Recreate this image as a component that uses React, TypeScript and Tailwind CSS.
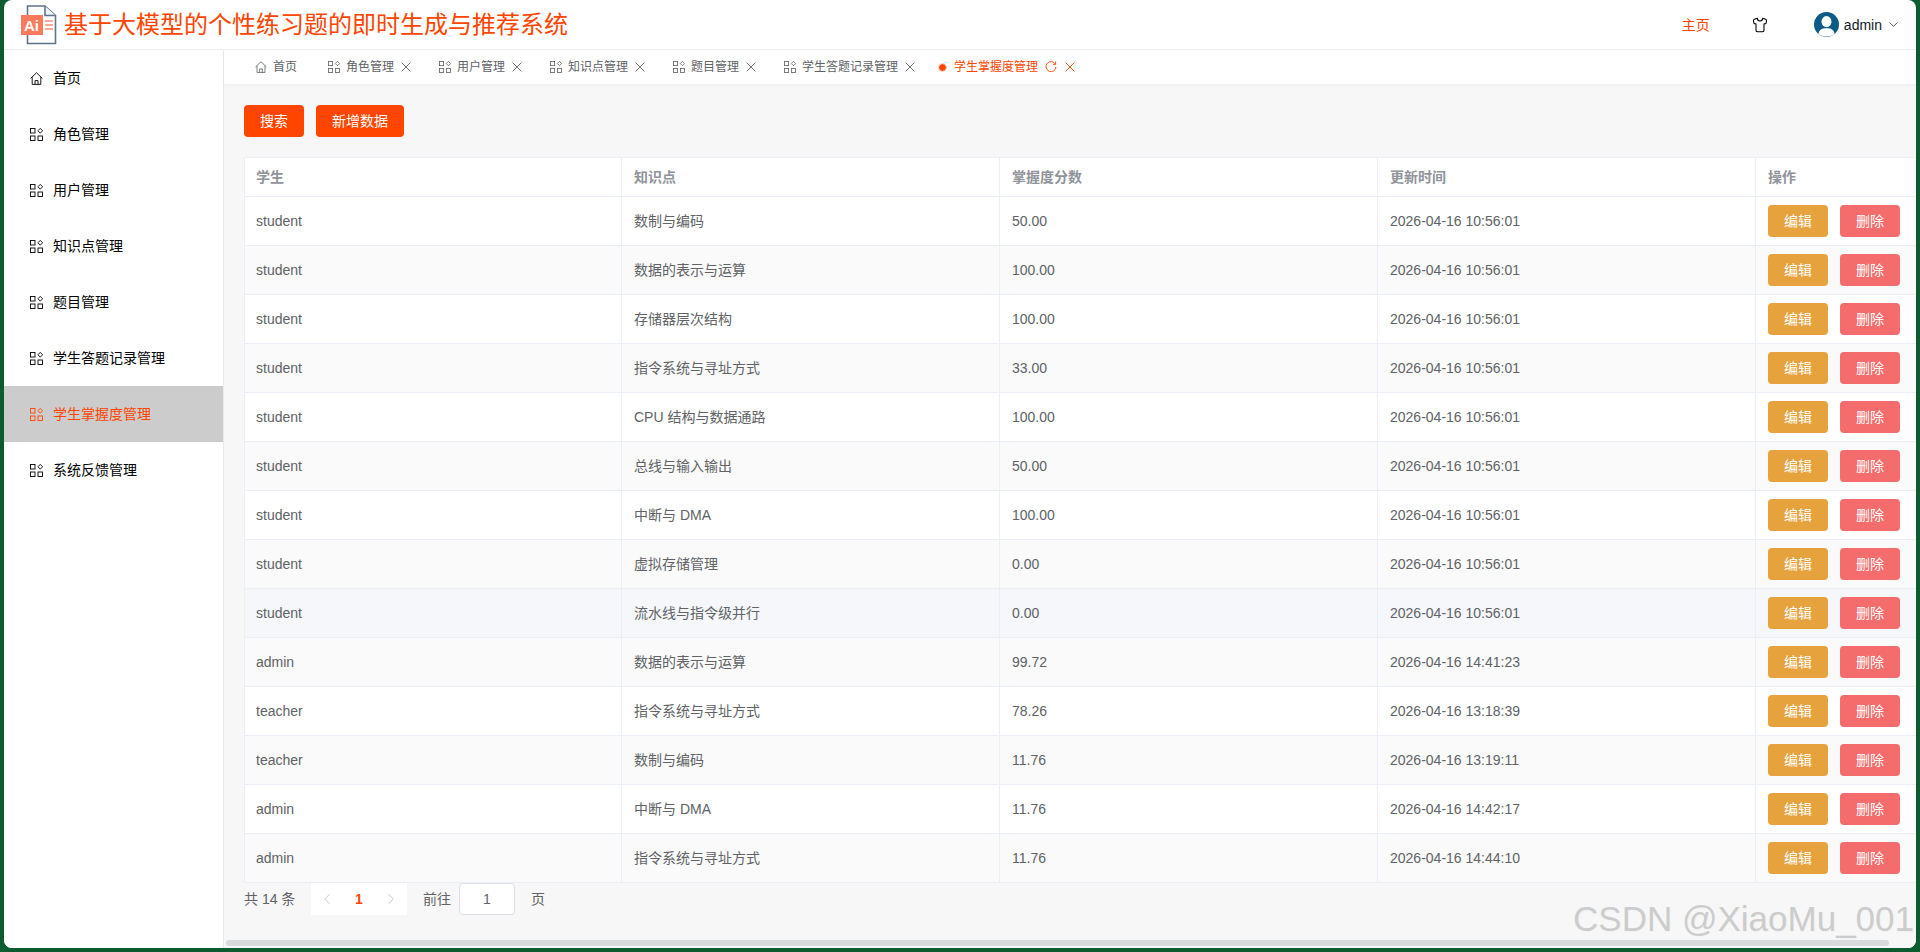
import { ChevronLeft, ChevronRight, ChevronDown, Shirt } from 'lucide-react';

const FONT = "[font-family:'Liberation_Sans','Noto_Sans_CJK_SC',sans-serif]";

const MENU = ['角色管理', '用户管理', '知识点管理', '题目管理', '学生答题记录管理', '学生掌握度管理', '系统反馈管理'];
const TABS = ['角色管理', '用户管理', '知识点管理', '题目管理', '学生答题记录管理'];

const ROWS = [
  ['student', '数制与编码', '50.00', '2026-04-16 10:56:01'],
  ['student', '数据的表示与运算', '100.00', '2026-04-16 10:56:01'],
  ['student', '存储器层次结构', '100.00', '2026-04-16 10:56:01'],
  ['student', '指令系统与寻址方式', '33.00', '2026-04-16 10:56:01'],
  ['student', 'CPU 结构与数据通路', '100.00', '2026-04-16 10:56:01'],
  ['student', '总线与输入输出', '50.00', '2026-04-16 10:56:01'],
  ['student', '中断与 DMA', '100.00', '2026-04-16 10:56:01'],
  ['student', '虚拟存储管理', '0.00', '2026-04-16 10:56:01'],
  ['student', '流水线与指令级并行', '0.00', '2026-04-16 10:56:01'],
  ['admin', '数据的表示与运算', '99.72', '2026-04-16 14:41:23'],
  ['teacher', '指令系统与寻址方式', '78.26', '2026-04-16 13:18:39'],
  ['teacher', '数制与编码', '11.76', '2026-04-16 13:19:11'],
  ['admin', '中断与 DMA', '11.76', '2026-04-16 14:42:17'],
  ['admin', '指令系统与寻址方式', '11.76', '2026-04-16 14:44:10'],
];

function MenuIcon({ size = 13 }: { size?: number }) {
  return (
    <svg width={size} height={size} viewBox="0 0 13 13" fill="none" stroke="currentColor" strokeWidth="0.9" className="shrink-0">
      <rect x="0.5" y="0.5" width="4.5" height="4.5" />
      <rect x="0.5" y="8" width="4.5" height="4.5" />
      <rect x="8" y="8" width="4.5" height="4.5" />
      <path d="M10.25 0.4 L12.6 2.75 L10.25 5.1 L7.9 2.75 Z" />
    </svg>
  );
}

function HomeIcon({ size = 13 }: { size?: number }) {
  return (
    <svg width={size} height={size} viewBox="0 0 13 13" fill="none" stroke="currentColor" strokeWidth="0.9" className="shrink-0">
      <path d="M0.6 6.4 L6.5 0.8 L12.4 6.4" />
      <path d="M2.2 5.2 V12.4 H10.8 V5.2" />
      <path d="M5 12.4 V8.6 H8 V12.4" />
    </svg>
  );
}

function CloseIcon({ className = '' }: { className?: string }) {
  return (
    <svg width="10" height="10" viewBox="0 0 10 10" fill="none" stroke="currentColor" strokeWidth="0.9" className={className}>
      <path d="M0.6 0.6 L9.4 9.4 M9.4 0.6 L0.6 9.4" />
    </svg>
  );
}

function Logo() {
  return (
    <svg width="38" height="40" viewBox="0 0 38 40" className="shrink-0">
      <path d="M7.5 1 H25 L35.5 10.5 V38.5 H7.5 Z" fill="#fff" stroke="#5d7389" strokeWidth="1.6" />
      <path d="M25 1 V10.5 H35.5" fill="#eef2f5" stroke="#5d7389" strokeWidth="1.6" />
      <rect x="1" y="10" width="22" height="20" fill="#ff7a5c" />
      <text x="4" y="26" fontSize="15" fontWeight="700" fill="#fff" fontFamily="Liberation Sans">Ai</text>
      <path d="M25 16 H33 M25 20 H33 M25 24 H33" stroke="#ff8f76" strokeWidth="1.6" />
    </svg>
  );
}

function Avatar() {
  return (
    <svg width="25" height="25" viewBox="0 0 25 25">
      <circle cx="12.5" cy="12.5" r="12.5" fill="#0c5a86" />
      <ellipse cx="12.5" cy="9.6" rx="5" ry="5.6" fill="#fff" />
      <path d="M4.4 22 C5 17.4 8 16.2 12.5 16.2 C17 16.2 20 17.4 20.6 22 C18 24 15.5 24.6 12.5 24.6 C9.5 24.6 7 24 4.4 22 Z" fill="#fff" />
    </svg>
  );
}

export default function App() {
  return (
    <div className={`h-[952px] w-[1920px] overflow-hidden bg-[#0d5c2f] pl-1 pr-1 pb-1 ${FONT}`}>
      <div className="relative flex h-full flex-col overflow-hidden rounded-lg bg-white">
        {/* top bar */}
        <header className="flex h-[50px] shrink-0 items-center border-b border-[#eeeeee] pl-4 pr-[15px]">
          <Logo />
          <h1 className="ml-[6px] text-2xl leading-none text-[#ff4500]">基于大模型的个性练习题的即时生成与推荐系统</h1>
          <span className="ml-auto text-sm text-[#ff4500]">主页</span>
          <Shirt size={16} strokeWidth={1.6} className="ml-[42px] text-black" />
          <div className="ml-[46px] flex items-center">
            <Avatar />
            <span className="ml-[5px] text-sm text-[#111827]">admin</span>
            <ChevronDown size={15} strokeWidth={1.3} className="ml-[4px] text-[#333]" />
          </div>
        </header>

        <div className="flex min-h-0 flex-1">
          {/* side menu */}
          <aside className="w-[220px] shrink-0 border-r border-[#e8eaee] bg-white">
            <div className="flex h-14 items-center pl-[26px] text-sm text-black">
              <HomeIcon />
              <span className="ml-[10px]">首页</span>
            </div>
            {MENU.map(m => (
              <div
                key={m}
                className={`flex h-14 items-center pl-[26px] text-sm ${m === '学生掌握度管理' ? 'bg-[#cccccc] text-[#ff4500]' : 'text-black'}`}
              >
                <MenuIcon />
                <span className="ml-[10px]">{m}</span>
              </div>
            ))}
          </aside>

          <main className="flex min-w-0 flex-1 flex-col bg-[#f7f7f7]">
            {/* tabs */}
            <nav className="flex h-[34px] shrink-0 items-center bg-white pl-[31px] text-xs text-[#606266] shadow-[0_2px_4px_rgba(0,0,0,0.04)]">
              <div className="mr-[31px] flex items-center gap-[6px]">
                <HomeIcon size={12} />
                <span>首页</span>
              </div>
              {TABS.map(t => (
                <div key={t} className="mr-[28px] flex items-center gap-[6px]">
                  <MenuIcon size={12} />
                  <span>{t}</span>
                  <CloseIcon className="ml-px" />
                </div>
              ))}
              <div className="-ml-[4px] flex items-center text-[#ff4500]">
                <span className="h-[7px] w-[7px] rounded-full bg-[#ff4500] outline-1 outline-[#ffc4ae]" />
                <span className="ml-2">学生掌握度管理</span>
                <svg width="12" height="12" viewBox="0 0 12 12" fill="none" stroke="currentColor" strokeWidth="0.9" className="ml-[7px]">
                  <path d="M10.4 3.2 A5 5 0 1 0 11 6" />
                  <path d="M10.6 0.6 V3.4 H7.8" />
                </svg>
                <CloseIcon className="ml-2" />
              </div>
            </nav>

            {/* toolbar */}
            <div className="flex shrink-0 gap-3 pl-5 pt-[21px]">
              <button className="h-8 w-[60px] rounded-[4px] bg-[#ff4500] text-sm text-white">搜索</button>
              <button className="h-8 w-[88px] rounded-[4px] bg-[#ff4500] text-sm text-white">新增数据</button>
            </div>

            {/* table */}
            <div className="mt-5 min-h-0 overflow-hidden pl-5">
              <table className="w-[1686px] table-fixed border-separate border-spacing-0 bg-white text-sm text-[#606266]">
                <colgroup>
                  <col className="w-[378px]" />
                  <col className="w-[378px]" />
                  <col className="w-[378px]" />
                  <col className="w-[378px]" />
                  <col className="w-[174px]" />
                </colgroup>
                <thead>
                  <tr className="h-10 text-left font-semibold text-[#909399]">
                    <th className="border-y border-r border-l border-[#ebeef5] pl-[11px] font-semibold">学生</th>
                    <th className="border-y border-r border-[#ebeef5] pl-3 font-semibold">知识点</th>
                    <th className="border-y border-r border-[#ebeef5] pl-3 font-semibold">掌握度分数</th>
                    <th className="border-y border-r border-[#ebeef5] pl-3 font-semibold">更新时间</th>
                    <th className="border-y border-r border-[#ebeef5] pl-3 font-semibold">操作</th>
                  </tr>
                </thead>
                <tbody>
                  {ROWS.map((r, i) => (
                    <tr key={i} className={`h-[49px] ${i === 8 ? 'bg-[#f5f7fa]' : i % 2 === 1 ? 'bg-[#fafafa]' : 'bg-white'}`}>
                      <td className="border-b border-r border-l border-[#ebeef5] pl-[11px]">{r[0]}</td>
                      <td className="border-b border-r border-[#ebeef5] pl-3">{r[1]}</td>
                      <td className="border-b border-r border-[#ebeef5] pl-3">{r[2]}</td>
                      <td className="border-b border-r border-[#ebeef5] pl-3">{r[3]}</td>
                      <td className="border-b border-r border-[#ebeef5] pl-3">
                        <div className="flex gap-3">
                          <button className="h-8 w-[60px] rounded-[4px] bg-[#e6a23c] text-sm text-white">编辑</button>
                          <button className="h-8 w-[60px] rounded-[4px] bg-[#f56c6c] text-sm text-white">删除</button>
                        </div>
                      </td>
                    </tr>
                  ))}
                </tbody>
              </table>
            </div>

            {/* pagination */}
            <div className="flex shrink-0 items-center pl-5 text-sm text-[#606266]">
              <span className="w-[67px]">共 14 条</span>
              <button className="flex h-8 w-8 items-center justify-center bg-white text-[#b4b7bd]">
                <ChevronLeft size={18} strokeWidth={1} />
              </button>
              <span className="flex h-8 w-8 items-center justify-center bg-white font-bold text-[#ff4500]">1</span>
              <button className="flex h-8 w-8 items-center justify-center bg-white text-[#b4b7bd]">
                <ChevronRight size={18} strokeWidth={1} />
              </button>
              <span className="ml-4">前往</span>
              <span className="ml-2 flex h-8 w-14 items-center justify-center rounded-[4px] border border-[#dcdfe6] bg-white">1</span>
              <span className="ml-4">页</span>
            </div>

            {/* horizontal scrollbar */}
            <div className="mt-auto mb-[2px] ml-[2px] h-[6px] w-[1663px] shrink-0 rounded-[3px] bg-[#d9dadc]" />
          </main>
        </div>

        <span className="absolute bottom-[12px] right-[2px] text-[35px] leading-none text-[#cccccc] [text-shadow:1px_1px_1px_#f2f2f2]">
          CSDN @XiaoMu_001
        </span>
      </div>
    </div>
  );
}
